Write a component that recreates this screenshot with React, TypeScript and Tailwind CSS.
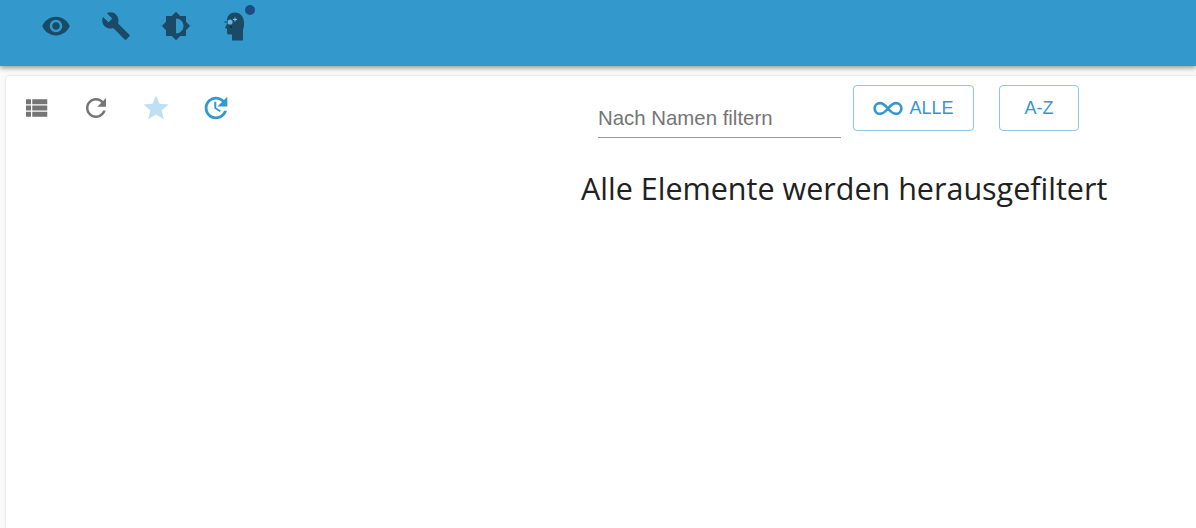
const P = ({ d, c, cls = "w-[30px] h-[30px]" }: { d: string; c: string; cls?: string }) => (
  <svg viewBox="0 0 24 24" className={cls + " " + c} fill="currentColor"><path d={d} /></svg>
);

const eye = "M12 4.5C7 4.5 2.73 7.61 1 12c1.73 4.39 6 7.5 11 7.5s9.27-3.11 11-7.5c-1.73-4.39-6-7.5-11-7.5zM12 17c-2.76 0-5-2.24-5-5s2.24-5 5-5 5 2.24 5 5-2.24 5-5 5zm0-8c-1.66 0-3 1.34-3 3s1.34 3 3 3 3-1.34 3-3-1.34-3-3-3z";
const wrench = "M22.7 19l-9.1-9.1c.9-2.3.4-5-1.5-6.9-2-2-5-2.4-7.4-1.3L9 6 6 9 1.6 4.7C.4 7.1.9 10.1 2.9 12.1c1.9 1.9 4.6 2.4 6.9 1.5l9.1 9.1c.4.4 1 .4 1.4 0l2.3-2.3c.5-.4.5-1.1.1-1.4z";
const bright = "M20 15.31L23.31 12 20 8.69V4h-4.69L12 .69 8.69 4H4v4.69L.69 12 4 15.31V20h4.69L12 23.31 15.31 20H20v-4.69zM12 18V6c3.31 0 6 2.69 6 6s-2.69 6-6 6z";
const list = "M4 14h4v-4H4v4zm0 5h4v-4H4v4zM4 9h4V5H4v4zm5 5h12v-4H9v4zm0 5h12v-4H9v4zM9 5v4h12V5H9z";
const refresh = "M17.65 6.35C16.2 4.9 14.21 4 12 4c-4.42 0-7.99 3.58-7.99 8s3.57 8 7.99 8c3.73 0 6.84-2.55 7.73-6h-2.08c-.82 2.33-3.04 4-5.65 4-3.31 0-6-2.69-6-6s2.69-6 6-6c1.66 0 3.14.69 4.22 1.78L13 11h7V4l-2.35 2.35z";
const star = "M12 17.27L18.18 21l-1.64-7.03L22 9.24l-7.19-.61L12 2 9.19 8.63 2 9.24l5.46 4.73L5.82 21z";
const clockHands = "M10.8 7.500h1.400v4.300l3.200 1.900-.7 1.100-3.900-2.400z";

function Head() {
  return (
    <div className="relative w-[30px] h-[30px]">
      <svg viewBox="0 0 30 30" className="w-[30px] h-[30px]">
        <path fill="#1a4a66" d="M16 .5c-4.800 0-8 3.300-8 8v3.500l-1.800 3.200c-.3.6.1 1.200.7 1.200H8v4.100c0 1.200.9 2.100 2 2.100h3v5.900h11V17.800c.8-1.800 1-3.500 1-6.800C25 5 21.500.5 16 .5z" />
        <circle cx="11" cy="10" r="2.600" fill="#66b3dd" />
        <rect x="5.500" y="9.500" width="3" height="1.200" fill="#1a4a66" />
        <path d="M15.500 5.500h1V7H18v1h-1.500v1.500h-1V8H14V7h1.500z" fill="#8cc8e8" />
        <circle cx="12" cy="15" r="1.100" fill="#0d2c40" />
      </svg>
      <span className="absolute right-[-6px] top-[-7px] w-[10px] h-[10px] rounded-full bg-[#1c4c86]" />
    </div>
  );
}

export default function App() {
  return (
    <div className="relative w-[1196px] h-[528px] overflow-hidden bg-[#fafafa] font-['Liberation_Sans',sans-serif]">
      <header className="h-[66px] bg-[#3399cc] shadow-[0_2px_5px_rgba(0,0,0,0.4)] relative z-10 flex items-start gap-[30px] pl-[41px] pt-[11px]">
        <P d={eye} c="text-[#1a4a66]" />
        <P d={wrench} c="text-[#1a4a66]" />
        <P d={bright} c="text-[#1a4a66]" />
        <div className="pt-[1px] ml-[-2px]"><Head /></div>
      </header>
      <main className="ml-[6px] mt-[10px] h-[452px] rounded-tl-[4px] bg-white shadow-[0_0_3px_rgba(0,0,0,0.15)]">
        <div className="flex items-start h-[60px]">
          <div className="flex items-start w-[570px] pl-[15px] pt-[17px]">
            <P d={list} c="text-[#757575]" />
            <P d={refresh} c="text-[#757575] ml-[30px]" />
            <P d={star} c="text-[#bfe0f2] ml-[30px]" />
            <svg viewBox="0 0 24 24" className="ml-[28px] mt-[-2px] w-[34px] h-[34px] text-[#3399cc]" fill="currentColor"><path d={refresh} /><path d={clockHands} /></svg>
          </div>
          <div className="ml-[22px] w-[243px] h-[53px] mt-[9px] border-b border-[#999999] flex items-end pb-[7px] text-[20.4px] leading-[24px] text-[#757575]">Nach Namen filtern</div>
          <button className="ml-[12px] mt-[9px] w-[121px] h-[46px] rounded-[4px] border border-[#8cc6e4] text-[#3399cc] text-[18px] flex items-center justify-center gap-[6px]">
            <svg viewBox="2 1 28 14" className="w-[30px] h-[15px]" fill="none" stroke="currentColor" strokeWidth="2.400"><path d="M16 8c-2.500-3-4.500-5-7.500-5a5 5 0 0 0 0 10c3 0 5-2 7.500-5s4.500-5 7.500-5a5 5 0 0 1 0 10c-3 0-5-2-7.500-5z" /></svg>
            ALLE
          </button>
          <button className="ml-[25px] mt-[9px] w-[80px] h-[46px] rounded-[4px] border border-[#8cc6e4] text-[#3399cc] text-[18px]">A-Z</button>
        </div>
        <h2 className="ml-[575px] mt-[32px] text-[30.500px] leading-[40px] text-[#212121] font-['Open_Sans',sans-serif] whitespace-nowrap">Alle Elemente werden herausgefiltert</h2>
      </main>
    </div>
  );
}
